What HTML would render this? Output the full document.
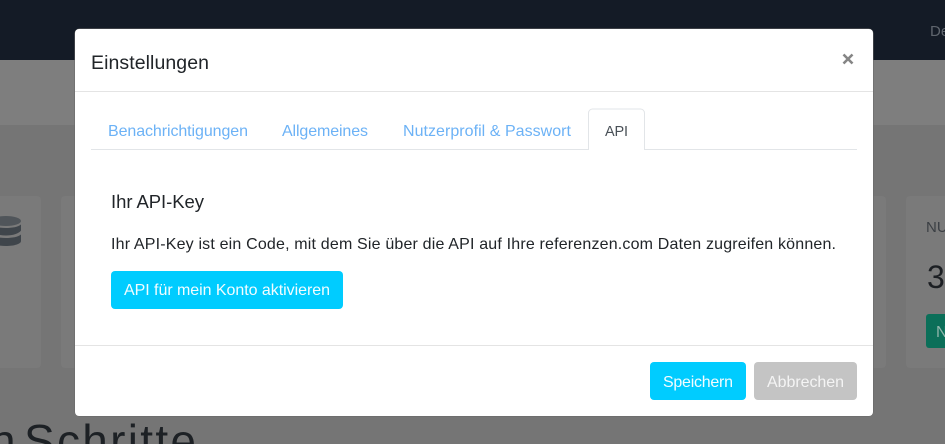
<!DOCTYPE html>
<html lang="de"><head><meta charset="utf-8"><title>Einstellungen</title>
<style>
html,body{margin:0;padding:0;width:945px;height:444px;overflow:hidden;background:#747474}
svg{display:block;overflow:hidden}
text{font-family:"Liberation Sans",sans-serif}
</style></head>
<body>
<svg width="945" height="444" viewBox="0 0 945 444" xmlns="http://www.w3.org/2000/svg">
<rect width="945" height="444" fill="#757575"/>
<rect width="945" height="125" y="0" fill="#7e7e7e"/>
<rect width="945" height="60" fill="#141b26"/>
<text x="930" y="36" font-size="15" fill="#5f656d">Des</text>
<!-- background cards -->
<rect x="-20" y="196" width="61" height="172" rx="4" fill="#7a7a7a"/>
<rect x="61" y="196" width="825" height="172" rx="4" fill="#7a7a7a"/>
<rect x="906" y="196" width="60" height="172" rx="4" fill="#7a7a7a"/>
<!-- db icon -->
<g fill="#3f454b">
<ellipse cx="6" cy="221" rx="15" ry="5" fill="#50555a"/>
<path d="M-9 224.500c3 2.500 9 3.500 15 3.500s12-1 15-3.500v6c-2 3-8 5-15 5s-13-2-15-5z"/>
<path d="M-9 234.500c3 2.500 9 3.500 15 3.500s12-1 15-3.500v6.500c0 3-7 5-15 5s-15-2-15-5z"/>
</g>
<text x="926" y="232" font-size="15" fill="#3b3f44">NUTZER</text>
<text x="927" y="288" font-size="32" fill="#1c1f23">3</text>
<rect x="926" y="314" width="40" height="34" rx="3" fill="#0b6f59"/>
<text x="936" y="337" font-size="16" fill="#8fb5ab">N</text>
<text x="-10" y="457" font-size="46" fill="#1d2125">n</text>
<text x="24" y="457" font-size="46" fill="#1d2125" textLength="172" lengthAdjust="spacing">Schritte</text>
<!-- modal -->
<rect x="74.500" y="28.500" width="799" height="388" rx="5" fill="#666"/>
<rect x="75" y="29" width="798" height="387" rx="4" fill="#fff"/>
<text x="91" y="69" font-size="19.500" fill="#212529" textLength="118" lengthAdjust="spacing">Einstellungen</text>
<path d="M843.500 54.500l9 9m0-9l-9 9" stroke="#858585" stroke-width="2.600" fill="none"/>
<rect x="75" y="91" width="798" height="1" fill="#e4e4e4"/>
<!-- tabs -->
<rect x="91" y="149" width="766" height="1" fill="#e2e5e8"/>
<text x="108" y="136" font-size="16" fill="#6cb2f6" textLength="140" lengthAdjust="spacing">Benachrichtigungen</text>
<text x="282" y="136" font-size="16" fill="#6cb2f6" textLength="86" lengthAdjust="spacing">Allgemeines</text>
<text x="403" y="136" font-size="16" fill="#6cb2f6" textLength="168" lengthAdjust="spacing">Nutzerprofil &amp; Passwort</text>
<path d="M588.500 150v-37a4 4 0 0 1 4-4h48a4 4 0 0 1 4 4v37" fill="#fff" stroke="#e2e5e8"/>
<text x="605" y="136" font-size="14.500" fill="#495057" textLength="23" lengthAdjust="spacing">API</text>
<!-- body -->
<text x="111" y="208" font-size="18.500" fill="#212529" textLength="93" lengthAdjust="spacing">Ihr API-Key</text>
<text x="111" y="249" font-size="16" fill="#212529" textLength="725" lengthAdjust="spacing">Ihr API-Key ist ein Code, mit dem Sie über die API auf Ihre referenzen.com Daten zugreifen können.</text>
<rect x="111" y="271" width="232" height="38" rx="4" fill="#00ccff"/>
<text x="124" y="295" font-size="16" fill="#f2fcff" textLength="206" lengthAdjust="spacing">API für mein Konto aktivieren</text>
<!-- footer -->
<rect x="75" y="345" width="798" height="1" fill="#e4e4e4"/>
<rect x="650" y="362" width="96" height="38" rx="4" fill="#00ccff"/>
<text x="663" y="387" font-size="16" fill="#f2fcff" textLength="70" lengthAdjust="spacing">Speichern</text>
<rect x="754" y="362" width="103" height="38" rx="4" fill="#c4c4c4"/>
<text x="767" y="387" font-size="16" fill="#f4f4f4" textLength="77" lengthAdjust="spacing">Abbrechen</text>
</svg>
</body></html>
